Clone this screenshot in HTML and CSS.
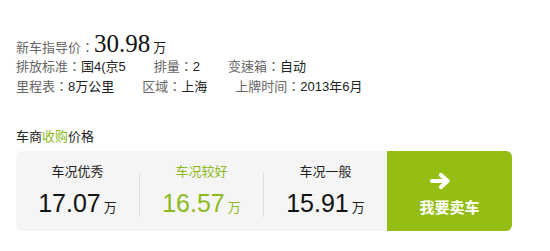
FILE: index.html
```html
<!DOCTYPE html>
<html lang="zh-CN">
<head>
    <meta charset="UTF-8">
    <title>车辆估价</title>
    <link rel="stylesheet" href="styles.css">
</head>
<body>
<div id="wrap">
    <div class="guide">
        <span class="label">新车指导价：</span><span class="guide-num">30.98</span><span class="unit">万</span>
    </div>
    <div class="info">
        <span class="item"><span class="label">排放标准：</span>国4(京5</span>
        <span class="item"><span class="label">排量：</span>2</span>
        <span class="item"><span class="label">变速箱：</span>自动</span>
    </div>
    <div class="info">
        <span class="item"><span class="label">里程表：</span>8万公里</span>
        <span class="item"><span class="label">区域：</span>上海</span>
        <span class="item"><span class="label">上牌时间：</span>2013年6月</span>
    </div>

    <h3 class="title">车商<em>收购</em>价格</h3>

    <div class="panel">
        <div class="cell">
            <p class="cond">车况优秀</p>
            <p class="price">17.07<span class="unit">万</span></p>
        </div>
        <i class="sep"></i>
        <div class="cell good">
            <p class="cond">车况较好</p>
            <p class="price">16.57<span class="unit">万</span></p>
        </div>
        <i class="sep"></i>
        <div class="cell">
            <p class="cond">车况一般</p>
            <p class="price">15.91<span class="unit">万</span></p>
        </div>
        <a class="sell" href="#">
            <svg class="arrow" width="22" height="18" viewBox="0 0 22 18">
                <path d="M3 9 H18 M12 3 L18.5 9 L12 15" fill="none" stroke="#fff" stroke-width="4.2" stroke-linecap="round" stroke-linejoin="round"/>
            </svg>
            <span>我要卖车</span>
        </a>
    </div>
</div>
</body>
</html>
```

FILE: styles.css
```css
*{
    margin: 0;
    padding: 0;
}
body{
    font-family: "Liberation Sans", "Noto Sans CJK SC", sans-serif;
    font-size: 13px;
    color: #333;
    background: #fff;
}
#wrap{
    padding: 31px 0 0 16px;
    width: 496px;
}
/* 冒号居中 */
.label{
    color: #666;
    font-family: "Liberation Sans", "Noto Sans CJK TC", sans-serif;
    font-feature-settings: "locl" 0;
}
.guide{
    height: 26px;
    line-height: 26px;
    overflow: hidden;
}
.guide-num{
    font-family: "Liberation Serif", serif;
    font-size: 25px;
    color: #111;
}
.unit{
    font-size: 13px;
    margin-left: 3px;
    color: #222;
}
.info{
    height: 20px;
    line-height: 20px;
    display: flex;
    gap: 28px;
    color: #222;
}
.title{
    margin-top: 30px;
    height: 20px;
    line-height: 20px;
    font-size: 13px;
    font-weight: normal;
    color: #222;
}
.title em{
    font-style: normal;
    color: #8cba1c;
}
.panel{
    margin-top: 4px;
    height: 80px;
    display: flex;
    background: #f5f5f5;
    border-radius: 6px;
}
.cell{
    flex: 1;
    text-align: center;
    padding-top: 11px;
}
.cond{
    height: 20px;
    line-height: 20px;
    font-size: 13px;
    color: #222;
}
.price{
    margin-top: 6px;
    height: 30px;
    line-height: 30px;
    font-size: 25px;
    color: #111;
}
.good .cond,
.good .price,
.good .unit{
    color: #8cba1c;
}
.sep{
    width: 1px;
    height: 44px;
    background: #dcdcdc;
    align-self: flex-end;
    margin-bottom: 14px;
}
.sell{
    width: 125px;
    background: #95be14;
    border-radius: 0 6px 6px 0;
    display: flex;
    flex-direction: column;
    align-items: center;
    padding-top: 21px;
    box-sizing: border-box;
    text-decoration: none;
    color: #fff;
}
.arrow{
    display: block;
    margin-right: 20px;
}
.sell span{
    margin-top: 8px;
    line-height: 20px;
    font-size: 15px;
    font-weight: bold;
}
```
